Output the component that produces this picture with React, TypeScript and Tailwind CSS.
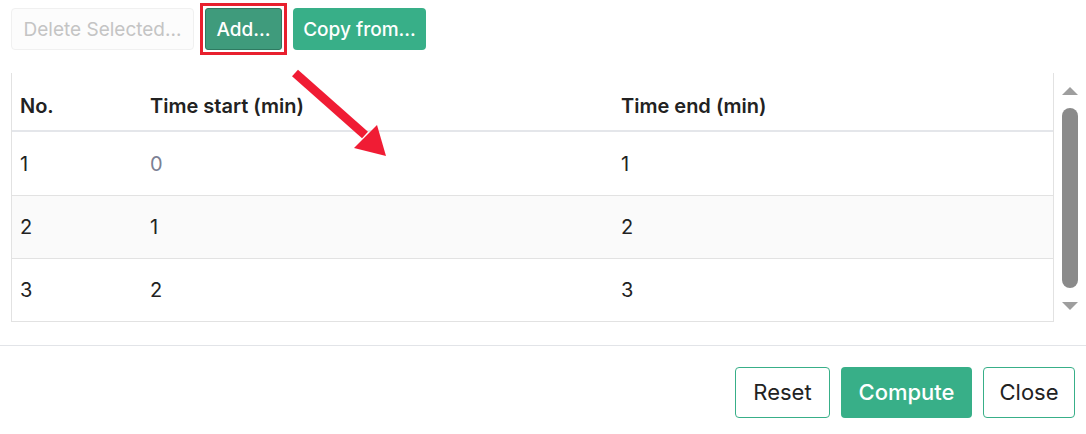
import React from 'react'

interface Row {
  no: number
  start: number
  end: number
}

const rows: Row[] = [
  { no: 1, start: 0, end: 1 },
  { no: 2, start: 1, end: 2 },
  { no: 3, start: 2, end: 3 },
]

const font = { fontFamily: 'Inter, "Noto Sans", sans-serif' }

export default function App() {
  return (
    <div className="relative w-[1086px] h-[434px] bg-white text-[#222]" style={font}>
      {/* toolbar */}
      <div className="flex items-center gap-[11px] pl-[11px] pt-[8px]">
        <button className="h-[42px] w-[183px] rounded-[4px] border border-[#f0f0f0] bg-[#fcfcfc] pt-[2px] text-[19px] text-[#c4c4c4]">
          Delete Selected...
        </button>
        <div className="-m-[5px] border-[3px] border-[#e8202e] p-[2px]">
          <button className="h-[42px] w-[77px] rounded-[3px] border border-[#2f7a61] bg-[#3f9b7c] pt-[2px] text-[19px] font-medium text-white">
            Add...
          </button>
        </div>
        <button className="h-[42px] w-[133px] rounded-[4px] bg-[#38af88] pt-[2px] text-[19px] font-medium text-white">
          Copy from...
        </button>
      </div>

      {/* grid with scrollbar */}
      <div className="mt-[23px] flex pl-[11px]">
        <div className="w-[1043px] border-x border-b border-[#e2e2e2]">
          <div className="grid h-[59px] grid-cols-[130px_471px_1fr] items-end border-b-2 border-[#e4e6ea] pb-[9px] pl-[8px] text-[20px] font-semibold text-[#222]">
            <div>No.</div>
            <div>Time start (min)</div>
            <div>Time end (min)</div>
          </div>
          {rows.map((r, i) => (
            <div
              key={r.no}
              className={`grid h-[63px] grid-cols-[130px_471px_1fr] items-center pl-[8px] text-[20px] ${
                i > 0 ? 'border-t border-[#e2e2e2]' : ''
              } ${i === 1 ? 'bg-[#fafafa]' : 'bg-white'}`}
            >
              <div>{r.no}</div>
              <div className={r.start === 0 ? 'text-[#7b8094]' : ''}>{r.start}</div>
              <div>{r.end}</div>
            </div>
          ))}
        </div>
        <div className="flex w-[32px] flex-col items-center pt-[14px]">
          <svg width="16" height="9" viewBox="0 0 16 9">
            <polygon points="8,0 16,8 0,8" fill="#9e9e9e" />
          </svg>
          <div className="mt-[12px] h-[180px] w-[16px] rounded-full bg-[#8a8a8a]" />
          <svg className="mt-[13px]" width="16" height="9" viewBox="0 0 16 9">
            <polygon points="0,1 16,1 8,9" fill="#9e9e9e" />
          </svg>
        </div>
      </div>

      <div className="mt-[23px] border-t border-[#e2e4e8]" />

      {/* footer actions */}
      <div className="flex justify-end gap-[11px] pr-[11px] pt-[21px]">
        <button className="h-[51px] w-[95px] rounded-[4px] border border-[#38af88] bg-white text-[22px] text-[#222]">
          Reset
        </button>
        <button className="h-[51px] w-[131px] rounded-[4px] bg-[#38af88] text-[22px] font-medium text-white">
          Compute
        </button>
        <button className="h-[51px] w-[92px] rounded-[4px] border border-[#38af88] bg-white text-[22px] text-[#222]">
          Close
        </button>
      </div>

      {/* pointer arrow */}
      <svg className="pointer-events-none absolute left-0 top-0" width="1086" height="434">
        <line x1="295" y1="73" x2="365" y2="135" stroke="#f01c34" strokeWidth="9" />
        <polygon points="386,156 354,148 377,125" fill="#f01c34" />
      </svg>
    </div>
  )
}
